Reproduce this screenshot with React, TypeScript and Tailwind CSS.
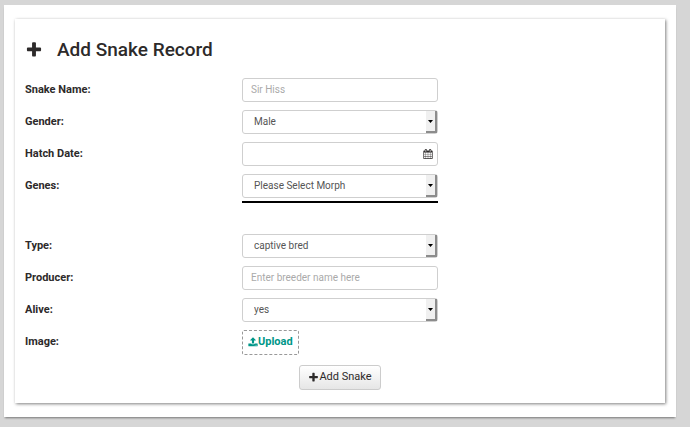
import type { ReactNode } from "react";

const genders = ["Male", "Female"];
const morphs = ["Please Select Morph", "Albino", "Pastel", "Piebald"];
const types = ["captive bred", "wild caught"];
const alive = ["yes", "no"];

const control =
  "block h-6 w-full rounded-[3px] border border-[#cfcfcf] bg-white pb-px text-[10px] text-[#555] outline-none placeholder:text-[#aaa]";

export default function App() {
  return (
    <div className="min-h-screen bg-[#d6d6d6] pt-[5px] pr-[14px] pb-[10px] pl-1 font-[Roboto,sans-serif] text-[#2d2a2a]">
      <div className="bg-white px-[11px] py-[14px] shadow-[0_2px_2px_-1px_rgba(0,0,0,0.45)]">
        <form
          onSubmit={(e) => e.preventDefault()}
          className="bg-white px-[10px] pt-[17px] pb-[13px] shadow-[1px_1px_3px_rgba(0,0,0,0.5)]"
        >
          <h1 className="mb-[14px] flex h-7 items-center gap-[14px] text-[19px] font-medium">
            <PlusIcon className="h-[18px] w-[18px]" />
            Add Snake Record
          </h1>

          <div className="grid gap-2">
            <Row id="name" label="Snake Name:">
              <input id="name" type="text" placeholder="Sir Hiss" className={`${control} px-2`} />
            </Row>
            <Row id="gender" label="Gender:">
              <Select id="gender" options={genders} />
            </Row>
            <Row id="hatched" label="Hatch Date:">
              <div className="relative">
                <input id="hatched" type="text" className={`${control} pr-6 pl-2`} />
                <CalendarIcon className="pointer-events-none absolute top-[7px] right-[5px] h-[10px] w-[10px]" />
              </div>
            </Row>
            <Row id="genes" label="Genes:">
              <Select id="genes" options={morphs} />
            </Row>
          </div>

          <div className="grid h-9 grid-cols-[217px_196px] pt-[3px]">
            <hr className="col-start-2 border-t-2 border-black" />
          </div>

          <div className="grid gap-2">
            <Row id="type" label="Type:">
              <Select id="type" options={types} />
            </Row>
            <Row id="producer" label="Producer:">
              <input id="producer" type="text" placeholder="Enter breeder name here" className={`${control} px-2`} />
            </Row>
            <Row id="alive" label="Alive:">
              <Select id="alive" options={alive} />
            </Row>
            <Row id="image" label="Image:">
              <button
                id="image"
                type="button"
                className="flex h-[25px] items-center rounded-[2px] border border-dashed border-[#999] px-[5px] pb-px text-[11px] font-bold text-[#009688]"
              >
                <UploadIcon className="h-[10px] w-[10px]" />
                Upload
              </button>
            </Row>
          </div>

          <div className="mt-[10px] flex justify-center">
            <button
              type="submit"
              className="flex h-[25px] items-center rounded-[3px] border border-[#ccc] bg-linear-to-b from-white to-[#e6e6e6] px-2 pb-px text-[11px]"
            >
              <PlusIcon className="h-[11px] w-[11px]" />
              Add Snake
            </button>
          </div>
        </form>
      </div>
    </div>
  );
}

function Row({ id, label, children }: { id: string; label: string; children: ReactNode }) {
  return (
    <div className="grid grid-cols-[217px_196px] items-center">
      <label htmlFor={id} className="text-[11px] font-bold">
        {label}
      </label>
      <div>{children}</div>
    </div>
  );
}

function Select({ id, options }: { id: string; options: string[] }) {
  return (
    <div className="relative">
      <select id={id} className={`${control} appearance-none pr-4 pl-[11px]`}>
        {options.map((o) => (
          <option key={o}>{o}</option>
        ))}
      </select>
      <span className="pointer-events-none absolute inset-y-px right-px flex w-[11px] items-center justify-center border-r-2 border-b-2 border-[#8c8c8c] bg-[#f0f0f0]">
        <svg className="h-[3px] w-[5px]" viewBox="0 0 5 3">
          <path d="M0 0h5L2.5 3z" />
        </svg>
      </span>
    </div>
  );
}

// ── Icons ──────────────────────────────────────────────
function PlusIcon({ className = "" }: { className?: string }) {
  return (
    <svg className={className} viewBox="0 0 1792 1792" fill="currentColor">
      <path d="M1600 736v192q0 40-28 68t-68 28h-416v416q0 40-28 68t-68 28h-192q-40 0-68-28t-28-68v-416h-416q-40 0-68-28t-28-68v-192q0-40 28-68t68-28h416v-416q0-40 28-68t68-28h192q40 0 68 28t28 68v416h416q40 0 68 28t28 68z" />
    </svg>
  );
}
function UploadIcon({ className = "" }: { className?: string }) {
  return (
    <svg className={className} viewBox="64 0 1664 1792" fill="currentColor">
      <path d="M1344 1472q0-26-19-45t-45-19-45 19-19 45 19 45 45 19 45-19 19-45zm256 0q0-26-19-45t-45-19-45 19-19 45 19 45 45 19 45-19 19-45zm128-224v320q0 40-28 68t-68 28h-1472q-40 0-68-28t-28-68v-320q0-40 28-68t68-28h427q21 56 70.5 92t110.5 36h256q61 0 110.5-36t70.5-92h427q40 0 68 28t28 68zm-325-648q-17 40-59 40h-256v448q0 26-19 45t-45 19h-256q-26 0-45-19t-19-45v-448h-256q-42 0-59-40-17-39 14-69l448-448q18-19 45-19t45 19l448 448q31 30 14 69z" />
    </svg>
  );
}
function CalendarIcon({ className = "" }: { className?: string }) {
  return (
    <svg className={className} viewBox="64 0 1664 1792" fill="currentColor">
      <path d="M192 1664h288v-288h-288v288zm352 0h320v-288h-320v288zm-352-352h288v-320h-288v320zm352 0h320v-320h-320v320zm-352-384h288v-288h-288v288zm736 736h320v-288h-320v288zm-384-736h320v-288h-320v288zm768 736h288v-288h-288v288zm-384-352h320v-320h-320v320zm-352-864v-288q0-13-9.5-22.5t-22.5-9.5h-64q-13 0-22.5 9.5t-9.5 22.5v288q0 13 9.5 22.5t22.5 9.5h64q13 0 22.5-9.5t9.5-22.5zm736 864h288v-320h-288v320zm-384-384h320v-288h-320v288zm384 0h288v-288h-288v288zm32-480v-288q0-13-9.5-22.5t-22.5-9.5h-64q-13 0-22.5 9.5t-9.5 22.5v288q0 13 9.5 22.5t22.5 9.5h64q13 0 22.5-9.5t9.5-22.5zm384-64v1280q0 52-38 90t-90 38h-1408q-52 0-90-38t-38-90v-1280q0-52 38-90t90-38h128v-96q0-66 47-113t113-47h64q66 0 113 47t47 113v96h384v-96q0-66 47-113t113-47h64q66 0 113 47t47 113v96h128q52 0 90 38t38 90z" />
    </svg>
  );
}
